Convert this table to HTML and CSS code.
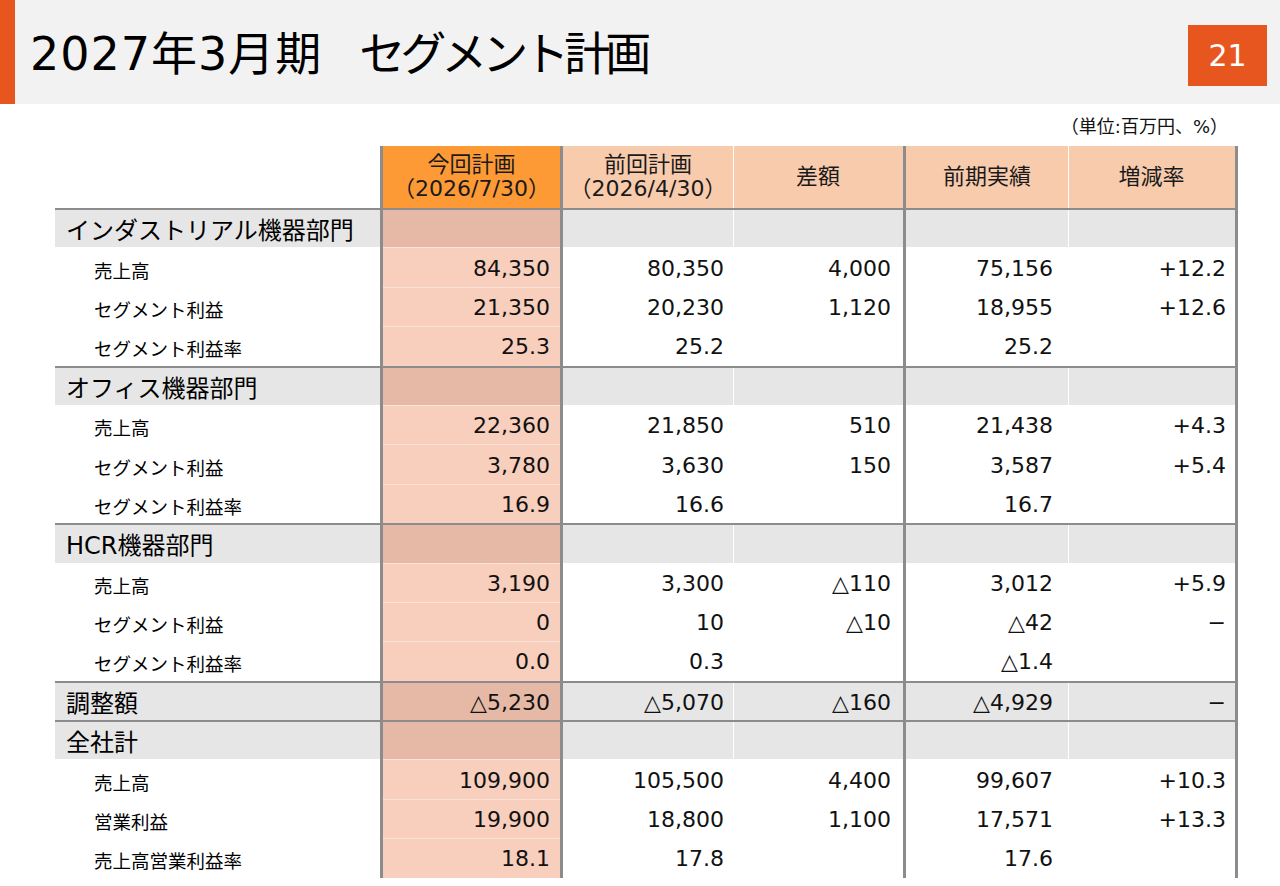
FILE: index.html
```html
<!DOCTYPE html>
<html lang="ja">
<head>
<meta charset="utf-8">
<title>2027年3月期 セグメント計画</title>
<link rel="stylesheet" href="styles.css">
</head>
<body>
<header class="page-head">
  <h1 class="title"><span class="title-term">2027年3月期</span><span class="title-gap">セグメント計画</span></h1>
  <div class="page-no">21</div>
</header>
<div class="unit">（単位:百万円、%）</div>
<div class="tbl">
  <div class="row head">
    <div class="cell c-lbl"></div>
    <div class="cell c-now">今回計画<br>（2026/7/30）</div>
    <div class="cell c-prev">前回計画<br>（2026/4/30）</div>
    <div class="cell c-diff">差額</div>
    <div class="cell c-last">前期実績</div>
    <div class="cell c-rate">増減率</div>
  </div>

  <div class="row sec">
    <div class="cell c-lbl">インダストリアル機器部門</div>
    <div class="cell c-now"></div><div class="cell c-prev"></div><div class="cell c-diff"></div><div class="cell c-last"></div><div class="cell c-rate"></div>
  </div>
  <div class="row data">
    <div class="cell c-lbl">売上高</div>
    <div class="cell c-now">84,350</div><div class="cell c-prev">80,350</div><div class="cell c-diff">4,000</div><div class="cell c-last">75,156</div><div class="cell c-rate">+12.2</div>
  </div>
  <div class="row data">
    <div class="cell c-lbl">セグメント利益</div>
    <div class="cell c-now">21,350</div><div class="cell c-prev">20,230</div><div class="cell c-diff">1,120</div><div class="cell c-last">18,955</div><div class="cell c-rate">+12.6</div>
  </div>
  <div class="row data">
    <div class="cell c-lbl">セグメント利益率</div>
    <div class="cell c-now">25.3</div><div class="cell c-prev">25.2</div><div class="cell c-diff"></div><div class="cell c-last">25.2</div><div class="cell c-rate"></div>
  </div>

  <div class="row sec">
    <div class="cell c-lbl">オフィス機器部門</div>
    <div class="cell c-now"></div><div class="cell c-prev"></div><div class="cell c-diff"></div><div class="cell c-last"></div><div class="cell c-rate"></div>
  </div>
  <div class="row data">
    <div class="cell c-lbl">売上高</div>
    <div class="cell c-now">22,360</div><div class="cell c-prev">21,850</div><div class="cell c-diff">510</div><div class="cell c-last">21,438</div><div class="cell c-rate">+4.3</div>
  </div>
  <div class="row data">
    <div class="cell c-lbl">セグメント利益</div>
    <div class="cell c-now">3,780</div><div class="cell c-prev">3,630</div><div class="cell c-diff">150</div><div class="cell c-last">3,587</div><div class="cell c-rate">+5.4</div>
  </div>
  <div class="row data">
    <div class="cell c-lbl">セグメント利益率</div>
    <div class="cell c-now">16.9</div><div class="cell c-prev">16.6</div><div class="cell c-diff"></div><div class="cell c-last">16.7</div><div class="cell c-rate"></div>
  </div>

  <div class="row sec">
    <div class="cell c-lbl">HCR機器部門</div>
    <div class="cell c-now"></div><div class="cell c-prev"></div><div class="cell c-diff"></div><div class="cell c-last"></div><div class="cell c-rate"></div>
  </div>
  <div class="row data">
    <div class="cell c-lbl">売上高</div>
    <div class="cell c-now">3,190</div><div class="cell c-prev">3,300</div><div class="cell c-diff">△110</div><div class="cell c-last">3,012</div><div class="cell c-rate">+5.9</div>
  </div>
  <div class="row data">
    <div class="cell c-lbl">セグメント利益</div>
    <div class="cell c-now">0</div><div class="cell c-prev">10</div><div class="cell c-diff">△10</div><div class="cell c-last">△42</div><div class="cell c-rate">−</div>
  </div>
  <div class="row data">
    <div class="cell c-lbl">セグメント利益率</div>
    <div class="cell c-now">0.0</div><div class="cell c-prev">0.3</div><div class="cell c-diff"></div><div class="cell c-last">△1.4</div><div class="cell c-rate"></div>
  </div>

  <div class="row sec">
    <div class="cell c-lbl">調整額</div>
    <div class="cell c-now">△5,230</div><div class="cell c-prev">△5,070</div><div class="cell c-diff">△160</div><div class="cell c-last">△4,929</div><div class="cell c-rate">−</div>
  </div>

  <div class="row sec">
    <div class="cell c-lbl">全社計</div>
    <div class="cell c-now"></div><div class="cell c-prev"></div><div class="cell c-diff"></div><div class="cell c-last"></div><div class="cell c-rate"></div>
  </div>
  <div class="row data">
    <div class="cell c-lbl">売上高</div>
    <div class="cell c-now">109,900</div><div class="cell c-prev">105,500</div><div class="cell c-diff">4,400</div><div class="cell c-last">99,607</div><div class="cell c-rate">+10.3</div>
  </div>
  <div class="row data">
    <div class="cell c-lbl">営業利益</div>
    <div class="cell c-now">19,900</div><div class="cell c-prev">18,800</div><div class="cell c-diff">1,100</div><div class="cell c-last">17,571</div><div class="cell c-rate">+13.3</div>
  </div>
  <div class="row data">
    <div class="cell c-lbl">売上高営業利益率</div>
    <div class="cell c-now">18.1</div><div class="cell c-prev">17.8</div><div class="cell c-diff"></div><div class="cell c-last">17.6</div><div class="cell c-rate"></div>
  </div>
</div>
</body>
</html>
```

FILE: styles.css
```css
html, body {
  margin: 0;
  padding: 0;
  background: #ffffff;
}

body {
  width: 1280px;
  height: 886px;
  overflow: hidden;
  font-family: "DejaVu Sans", "Noto Sans CJK JP", sans-serif;
  color: #111111;
}

/* ---------- page header ---------- */
.page-head {
  display: flex;
  align-items: flex-start;
  height: 104px;
  background: #f2f2f2;
  border-left: 15px solid #e8561f;
  box-sizing: border-box;
}

.title {
  margin: 26px 0 0 15px;
  font-size: 46px;
  line-height: 56px;
  font-weight: normal;
  color: #000000;
  white-space: nowrap;
}

.title-term {
  letter-spacing: 1px;
}

.title-gap {
  margin-left: 37px;
  letter-spacing: -5px;
}

.page-no {
  margin: 25px 13px 0 auto;
  width: 79px;
  height: 61px;
  background: #e8561f;
  color: #ffffff;
  font-size: 30px;
  display: flex;
  align-items: center;
  justify-content: center;
}

/* ---------- unit note ---------- */
.unit {
  margin: 13px 52px 9px 0;
  text-align: right;
  font-size: 18px;
  line-height: 20px;
  color: #111111;
}

/* ---------- table ---------- */
.tbl {
  margin-left: 55px;
  width: 1183px;
}

.row {
  display: grid;
  grid-template-columns: 325px 180px 173px 170px 165px 170px;
  height: 39.4px;
  box-sizing: border-box;
}

.cell {
  box-sizing: border-box;
  display: flex;
  align-items: center;
  justify-content: flex-end;
  font-size: 22px;
  padding-top: 2px;
  white-space: nowrap;
}

.c-lbl {
  justify-content: flex-start;
}

.c-now {
  border-left: 3px solid #8c8c8c;
  padding-right: 10px;
}

.c-prev {
  border-left: 3px solid #8c8c8c;
  padding-right: 9px;
}

.c-diff {
  box-shadow: inset 1px 0 0 #ffffff;
  padding-right: 12px;
}

.c-last {
  border-left: 3px solid #8c8c8c;
  padding-right: 15px;
}

.c-rate {
  border-right: 3px solid #8c8c8c;
  box-shadow: inset 1px 0 0 #ffffff;
  padding-right: 9px;
}

/* header row */
.row.head {
  height: 62px;
}

.head .cell {
  justify-content: center;
  text-align: center;
  font-size: 22px;
  line-height: 24px;
  padding-top: 0;
  padding-right: 0;
  color: #1a1a1a;
}

.head .c-now {
  background: #fd9a36;
}

.head .c-prev,
.head .c-diff,
.head .c-last,
.head .c-rate {
  background: #f8cbad;
}

/* section rows */
.row.sec {
  border-top: 2px solid #8c8c8c;
  background: #e6e6e6;
}

.sec .c-lbl {
  font-size: 24px;
  padding-left: 11px;
  padding-top: 0;
  color: #000000;
}

.sec .c-now {
  background: #e6b9a7;
}

/* data rows */
.row.data {
  background: #ffffff;
}

.data .c-lbl {
  font-size: 18.5px;
  padding-left: 39px;
  padding-top: 5px;
  color: #000000;
}

.data .c-now {
  background: #f8cebd;
  box-shadow: inset 0 1px 0 #fbe3d9;
}
```
